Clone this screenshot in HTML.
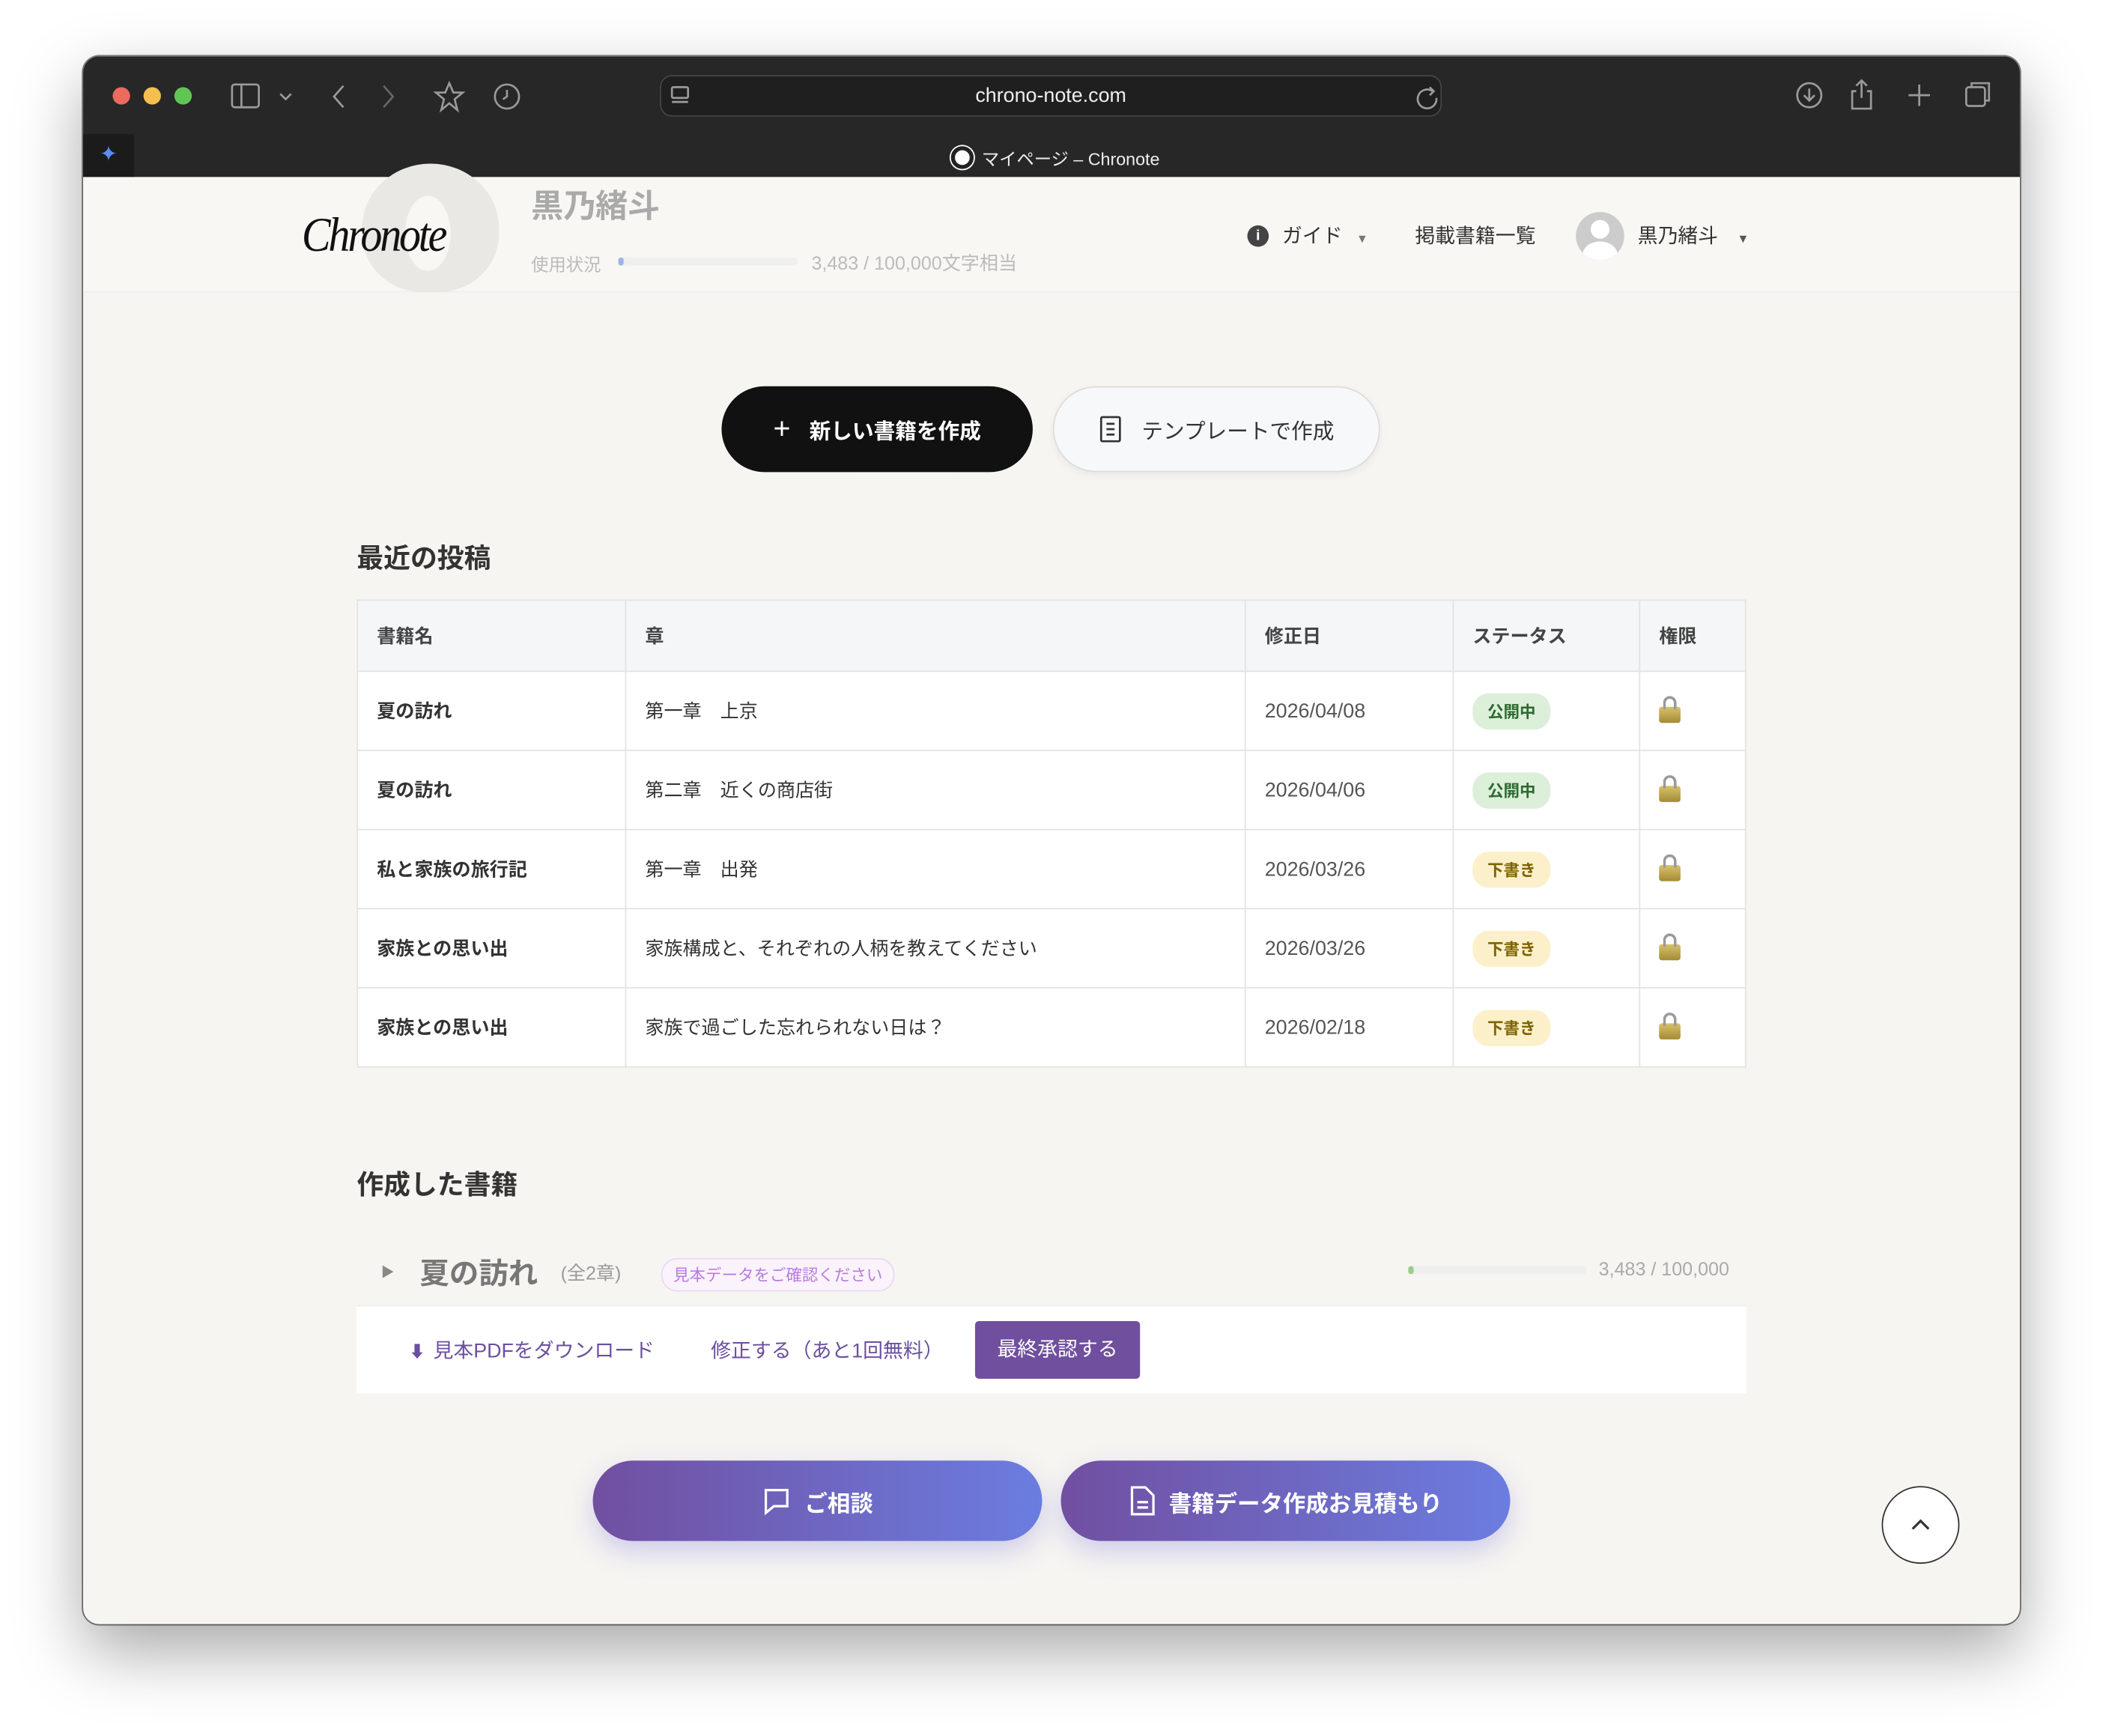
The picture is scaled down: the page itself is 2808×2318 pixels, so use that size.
<!DOCTYPE html>
<html><head><meta charset="utf-8"><style>
*{box-sizing:border-box;margin:0;padding:0}
html,body{width:2808px;height:2318px;overflow:hidden;background:#fff}
#s{position:absolute;left:0;top:0;width:1568px;height:1294px;transform:scale(1.79082);transform-origin:0 0;font-family:"Liberation Sans","Noto Sans CJK JP",sans-serif;background:#fff}
.a{position:absolute}
.win{left:62px;top:42px;width:1444px;height:1169px;border-radius:12px;overflow:hidden;box-shadow:0 20px 50px rgba(0,0,0,.35),0 0 0 1px rgba(0,0,0,.5);background:#f7f5f1}
.tb{left:0;top:0;width:1444px;height:90px;background:#272727}
.ic{stroke:#9a9a9a;fill:none;stroke-width:1.5}
td,th{border:1px solid #e3e3e3;text-align:left;padding-left:14px;font-size:14px;color:#333;font-weight:normal}
table{border-collapse:collapse;position:absolute;left:204px;top:405px;width:1036px;background:#fff}
th{background:#f5f6f8;height:53px;font-weight:bold;color:#444}
td{height:59px}
td:first-child{font-weight:bold}
td:nth-child(3){font-size:15px;color:#555}
.b{display:inline-block;font-size:12px;font-weight:bold;padding:5px 11px;border-radius:12px}
.g{background:#dcefd8;color:#2f6a32}.y{background:#fbf0c9;color:#7d6300}
.lk{display:inline-block;width:16px;height:12px;background:linear-gradient(#d8c26a,#a38b35);border-radius:2px;position:relative;top:4px}
.lk:before{content:"";position:absolute;left:3px;top:-8px;width:10px;height:10px;border:2px solid #9a9a9a;border-bottom:none;border-radius:6px 6px 0 0;box-sizing:border-box}
.gb{height:60px;border-radius:30px;background:linear-gradient(90deg,#714fa0,#6b7de0);color:#fff;font-weight:bold;font-size:17px;display:flex;align-items:center;justify-content:center;gap:10px;box-shadow:0 8px 20px rgba(110,110,220,.3)}
</style></head><body><div id="s">
<div class="a win">
 <div class="a tb">
  <div class="a" style="left:22px;top:23px;width:13px;height:13px;border-radius:50%;background:#ed6a5e"></div>
  <div class="a" style="left:45px;top:23px;width:13px;height:13px;border-radius:50%;background:#f5bf4f"></div>
  <div class="a" style="left:68px;top:23px;width:13px;height:13px;border-radius:50%;background:#61c554"></div>
  <svg class="a" style="left:108px;top:18px" width="300" height="24"><g class="ic"><rect x="3" y="3" width="20" height="17" rx="2"/><line x1="10" y1="3" x2="10" y2="20"/><path d="M39 10l4 4 4-4"/><path d="M86 4l-7 8 7 8"/><path d="M116 4l7 8-7 8" stroke="#666"/><path d="M165 2l3 7h7l-6 5 2 8-6-5-6 5 2-8-6-5h7z"/><circle cx="208" cy="12" r="9"/><path d="M208 7v5l-3 2"/></g></svg>
  <div class="a" style="left:430px;top:14px;width:583px;height:31px;border:1px solid #444;border-radius:9px;background:#1f1f1f;color:#eee;font-size:15px;text-align:center;line-height:30px">chrono-note.com</div>
  <svg class="a" style="left:436px;top:20px" width="580" height="22"><g class="ic"><rect x="3" y="3" width="12" height="8" rx="1"/><line x1="3" y1="14" x2="15" y2="14"/><path d="M570 6a7 7 0 1 0 3 5"/><path d="M568 3l3 3-3 3"/></g></svg>
  <svg class="a" style="left:1270px;top:16px" width="160" height="26"><g class="ic"><circle cx="17" cy="13" r="9"/><path d="M17 8v9M13 13l4 4 4-4"/><path d="M52 10h-3v13h14V10h-3M56 2v13M52 6l4-4 4 4"/><path d="M99 5v16M91 13h16"/><rect x="134" y="7" width="14" height="14" rx="2"/><path d="M138 7V4h13v13h-3"/></g></svg>
  <div class="a" style="left:0;top:58px;width:38px;height:32px;background:#1b1b1b;color:#5b8ef0;font-size:16px;text-align:center;line-height:32px">✦</div>
  <div class="a" style="left:647px;top:66px;color:#eee;font-size:13px;display:flex;align-items:center;gap:6px"><span style="width:17px;height:17px;border-radius:50%;background:#fff;display:inline-block;border:3px solid #222;box-shadow:0 0 0 1px #fff"></span>マイページ – Chronote</div>
 </div>
 <div class="a" style="left:0;top:90px;width:1444px;height:86px;background:#f8f7f3;border-bottom:1px solid #eee"></div>
 <div class="a" style="left:208px;top:80px;width:102px;height:96px;border-radius:50% 50% 45% 45%;background:#e9e8e5"></div>
 <div class="a" style="left:240px;top:104px;width:34px;height:56px;border-radius:50%;background:#f8f7f3"></div>
 <div class="a" style="left:163px;top:112px;font-family:'Liberation Serif',serif;font-style:italic;font-size:36px;color:#111;letter-spacing:-2px;transform:scaleX(.9);transform-origin:0 0">Chronote</div>
 <div class="a" style="left:334px;top:92px;font-size:24px;color:#aaa;font-weight:bold">黒乃緒斗</div>
 <div class="a" style="left:334px;top:145px;font-size:13px;color:#bbb">使用状況</div>
 <div class="a" style="left:399px;top:150px;width:134px;height:6px;border-radius:3px;background:#efefef"><div style="width:4px;height:6px;background:#9bb3e6;border-radius:3px"></div></div>
 <div class="a" style="left:543px;top:144px;font-size:14px;color:#bbb">3,483 / 100,000文字相当</div>
 <div class="a" style="left:868px;top:126px;width:16px;height:16px;border-radius:50%;background:#444;color:#fff;font-size:11px;font-weight:bold;text-align:center;line-height:16px">i</div>
 <div class="a" style="left:894px;top:123px;font-size:15px;color:#333">ガイド <span style="font-size:9px;color:#777;margin-left:6px">▼</span></div>
 <div class="a" style="left:993px;top:123px;font-size:15px;color:#333">掲載書籍一覧</div>
 <div class="a" style="left:1113px;top:116px;width:36px;height:36px;border-radius:50%;background:#ccc;overflow:hidden"><div style="position:absolute;left:11px;top:6px;width:14px;height:14px;border-radius:50%;background:#fff"></div><div style="position:absolute;left:5px;top:22px;width:26px;height:20px;border-radius:50%;background:#fff"></div></div>
 <div class="a" style="left:1159px;top:123px;font-size:15px;color:#333">黒乃緒斗 <span style="font-size:9px;color:#555;margin-left:10px">▼</span></div>

 <div class="a" style="left:476px;top:246px;width:232px;height:64px;border-radius:32px;background:#111;color:#fff;font-weight:bold;font-size:16px;display:flex;align-items:center;justify-content:center;gap:14px"><span style="font-size:22px;font-weight:normal">+</span>新しい書籍を作成</div>
 <div class="a" style="left:723px;top:246px;width:244px;height:64px;border-radius:32px;background:#f7f8fa;border:1px solid #ddd;color:#333;font-size:16px;display:flex;align-items:center;justify-content:center;gap:14px;box-shadow:0 2px 6px rgba(0,0,0,.06)"><svg width="18" height="20"><g fill="none" stroke="#333" stroke-width="1.5"><rect x="2" y="1" width="14" height="18" rx="1"/><path d="M6 6h6M6 10h6M6 14h6"/></g></svg>テンプレートで作成</div>

 <div class="a" style="left:204px;top:358px;font-size:20px;font-weight:bold;color:#333">最近の投稿</div>
 <table>
 <tr><th style="width:200px">書籍名</th><th style="width:462px">章</th><th style="width:155px">修正日</th><th style="width:139px">ステータス</th><th>権限</th></tr>
 <tr><td>夏の訪れ</td><td>第一章　上京</td><td>2026/04/08</td><td><span class="b g">公開中</span></td><td><span class="lk"></span></td></tr>
 <tr><td>夏の訪れ</td><td>第二章　近くの商店街</td><td>2026/04/06</td><td><span class="b g">公開中</span></td><td><span class="lk"></span></td></tr>
 <tr><td>私と家族の旅行記</td><td>第一章　出発</td><td>2026/03/26</td><td><span class="b y">下書き</span></td><td><span class="lk"></span></td></tr>
 <tr><td>家族との思い出</td><td>家族構成と、それぞれの人柄を教えてください</td><td>2026/03/26</td><td><span class="b y">下書き</span></td><td><span class="lk"></span></td></tr>
 <tr><td>家族との思い出</td><td>家族で過ごした忘れられない日は？</td><td>2026/02/18</td><td><span class="b y">下書き</span></td><td><span class="lk"></span></td></tr>
 </table>

 <div class="a" style="left:204px;top:825px;font-size:20px;font-weight:bold;color:#333">作成した書籍</div>
 <div class="a" style="left:222px;top:898px;font-size:10px;color:#888">▶</div>
 <div class="a" style="left:251px;top:890px;font-size:22px;font-weight:bold;color:#777">夏の訪れ</div>
 <div class="a" style="left:356px;top:897px;font-size:14px;color:#999">(全2章)</div>
 <div class="a" style="left:431px;top:896px;padding:3px 8px;border:1px solid #ead8f5;border-radius:12px;background:#fbf3fb;font-size:12px;color:#b77be0">見本データをご確認ください</div>
 <div class="a" style="left:988px;top:902px;width:133px;height:6px;border-radius:3px;background:#eee"><div style="width:4px;height:6px;background:#9ccc8a;border-radius:3px"></div></div>
 <div class="a" style="left:1130px;top:896px;font-size:14px;color:#aaa">3,483 / 100,000</div>
 <div class="a" style="left:204px;top:931px;width:1036px;height:66px;background:#fff;border-top:1px solid #eee"></div>
 <div class="a" style="left:243px;top:954px;font-size:15px;color:#6b4fa0"><span style="font-size:12px;margin-right:6px">⬇</span>見本PDFをダウンロード</div>
 <div class="a" style="left:468px;top:954px;font-size:15px;color:#6b4fa0">修正する（あと1回無料）</div>
 <div class="a" style="left:665px;top:943px;width:123px;height:43px;background:#6f4f9e;border-radius:3px;color:#fff;font-size:15px;text-align:center;line-height:43px">最終承認する</div>

 <div class="a gb" style="left:380px;top:1047px;width:335px"><svg width="22" height="22"><path d="M3 3h16v12H9l-6 5z" fill="none" stroke="#fff" stroke-width="1.8"/></svg>ご相談</div>
 <div class="a gb" style="left:729px;top:1047px;width:335px"><svg width="20" height="22"><g fill="none" stroke="#fff" stroke-width="1.8"><path d="M2 1h10l6 6v14H2z"/><path d="M6 12h8M6 16h8"/></g></svg>書籍データ作成お見積もり</div>
 <div class="a" style="left:1341px;top:1066px;width:58px;height:58px;border-radius:50%;background:#fff;border:1.5px solid #333"><svg width="58" height="58" style="position:absolute;left:-1px;top:-1px"><path d="M23 32l6-6 6 6" fill="none" stroke="#333" stroke-width="1.8"/></svg></div>
</div>
</div></body></html>
